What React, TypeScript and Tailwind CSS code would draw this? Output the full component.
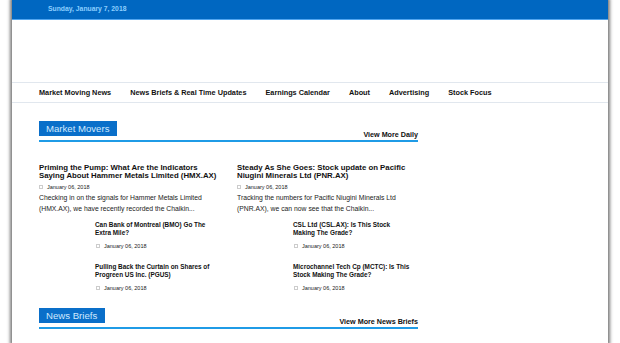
import React from "react";

const font = { fontFamily: '"Liberation Sans", Arial, sans-serif' };

function DateLine({ className = "" }: { className?: string }) {
  return (
    <div className={`flex items-center gap-[4px] text-[5.5px] leading-[8px] text-[#222] ${className}`}>
      <span className="inline-block w-[4px] h-[4px] border border-[#ccc]" />
      <span>January 06, 2018</span>
    </div>
  );
}

function Big({ title, text }: { title: string[]; text: string[] }) {
  return (
    <div className="whitespace-nowrap">
      <div className="font-bold text-[7.8px] leading-[8px] text-[#111]">
        {title.map((t, i) => (
          <div key={i}>{t}</div>
        ))}
      </div>
      <DateLine className="mt-[3px]" />
      <div className="mt-[1px] text-[6.8px] leading-[11px] text-[#222]">
        {text.map((t, i) => (
          <div key={i}>{t}</div>
        ))}
      </div>
    </div>
  );
}

function Small({ title }: { title: string[] }) {
  return (
    <div className="flex whitespace-nowrap">
      <div className="w-[56px] shrink-0" />
      <div>
        <div className="font-bold text-[6.4px] leading-[8px] text-[#111]">
          {title.map((t, i) => (
            <div key={i}>{t}</div>
          ))}
        </div>
        <DateLine className="mt-[5px] pl-[1px]" />
      </div>
    </div>
  );
}

function SectionHead({ label, more, w }: { label: string; more: string; w: string }) {
  return (
    <div className="border-b-2 border-[#1f9be6] flex items-end justify-between pb-[4px]">
      <div className={`bg-[#0a6fc9] text-[#cfe9ff] text-[9.6px] leading-[15px] pl-[7px] h-[15px] whitespace-nowrap ${w}`}>{label}</div>
      <div className="font-bold text-[7.2px] leading-[8px] text-[#111] mb-[-3px] whitespace-nowrap">{more}</div>
    </div>
  );
}

export default function App() {
  const nav = [
    "Market Moving News",
    "News Briefs & Real Time Updates",
    "Earnings Calendar",
    "About",
    "Advertising",
    "Stock Focus",
  ];
  return (
    <div className="w-[620px] h-[343px] bg-white overflow-hidden" style={font}>
      <div className="ml-[12px] w-[596px] h-[343px] bg-white shadow-[0_0_3px_2px_rgba(90,90,90,0.8)]">
        <div className="h-[20px] bg-[#0067c1] border-b border-[#52a6f0] flex items-center pl-[36px]">
          <span className="text-[6.8px] font-bold text-[#8ccfff] whitespace-nowrap">Sunday, January 7, 2018</span>
        </div>
        <div className="h-[62px]" />
        <div className="h-[21px] border-y border-[#e1e7ee] flex items-center pl-[27px] pt-[2px] gap-[19px] font-bold text-[7.3px] text-[#111] whitespace-nowrap">
          {nav.map((n) => (
            <span key={n}>{n}</span>
          ))}
        </div>
        <div className="pl-[27px] w-[406px]">
          <div className="mt-[18px]">
            <SectionHead label="Market Movers" more="View More Daily" w="w-[78px]" />
          </div>
          <div className="grid grid-cols-[198px_1fr] mt-[22px]">
            <Big
              title={["Priming the Pump: What Are the Indicators", "Saying About Hammer Metals Limited (HMX.AX)"]}
              text={["Checking in on the signals for Hammer Metals Limited", "(HMX.AX), we have recently recorded the Chaikin..."]}
            />
            <Big
              title={["Steady As She Goes: Stock update on Pacific", "Niugini Minerals Ltd (PNR.AX)"]}
              text={["Tracking the numbers for Pacific Niugini Minerals Ltd", "(PNR.AX), we can now see that the Chaikin..."]}
            />
          </div>
          <div className="grid grid-cols-[198px_1fr] mt-[7px] gap-y-[13px]">
            <Small title={["Can Bank of Montreal (BMO) Go The", "Extra Mile?"]} />
            <Small title={["CSL Ltd (CSL.AX): Is This Stock", "Making The Grade?"]} />
            <Small title={["Pulling Back the Curtain on Shares of", "Progreen US Inc. (PGUS)"]} />
            <Small title={["Microchannel Tech Cp (MCTC): Is This", "Stock Making The Grade?"]} />
          </div>
          <div className="mt-[16px]">
            <SectionHead label="News Briefs" more="View More News Briefs" w="w-[66px]" />
          </div>
        </div>
      </div>
    </div>
  );
}
